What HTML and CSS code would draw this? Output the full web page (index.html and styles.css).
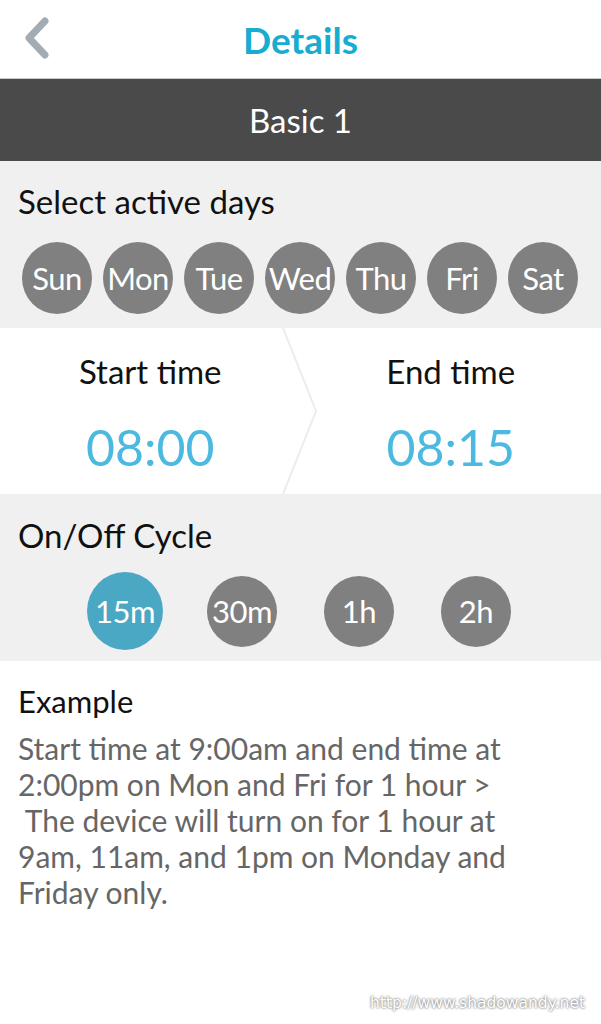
FILE: index.html
```html
<!DOCTYPE html>
<html lang="en">
<head>
<meta charset="utf-8">
<title>Details</title>
<link rel="stylesheet" href="styles.css">
</head>
<body>
<div class="screen">
  <header class="topbar">
    <svg class="back" viewBox="0 0 30 44" width="30" height="44">
      <path d="M24 5 L8 22 L24 39" fill="none" stroke="#a3acb3" stroke-width="7" stroke-linecap="round" stroke-linejoin="round"/>
    </svg>
    <h1 class="title">Details</h1>
  </header>
  <div class="namebar">Basic 1</div>

  <section class="panel days">
    <h2 class="label">Select active days</h2>
    <div class="day-row">
      <span class="day">Sun</span>
      <span class="day">Mon</span>
      <span class="day">Tue</span>
      <span class="day">Wed</span>
      <span class="day">Thu</span>
      <span class="day">Fri</span>
      <span class="day">Sat</span>
    </div>
  </section>

  <section class="times">
    <div class="time-col">
      <div class="time-label">Start time</div>
      <div class="time-value">08:00</div>
    </div>
    <svg class="divider" viewBox="0 0 40 166" width="40" height="166">
      <path d="M2 0 L35 83 L2 166" fill="none" stroke="#ececec" stroke-width="2"/>
    </svg>
    <div class="time-col">
      <div class="time-label">End time</div>
      <div class="time-value">08:15</div>
    </div>
  </section>

  <section class="panel cycle">
    <h2 class="label">On/Off Cycle</h2>
    <div class="cycle-row">
      <div class="cell"><span class="opt active">15m</span></div>
      <div class="cell"><span class="opt">30m</span></div>
      <div class="cell"><span class="opt">1h</span></div>
      <div class="cell"><span class="opt">2h</span></div>
    </div>
  </section>

  <section class="example">
    <h2 class="label small">Example</h2>
    <p class="desc">Start time at 9:00am and end time at<br>2:00pm on Mon and Fri for 1 hour &gt;<br>&nbsp;The device will turn on for 1 hour at<br>9am, 11am, and 1pm on Monday and<br>Friday only.</p>
  </section>

  <div class="watermark">http://www.shadowandy.net</div>
</div>
</body>
</html>
```
FILE: styles.css
```css
* { box-sizing: border-box; }
html, body {
  margin: 0;
  padding: 0;
  background: #ffffff;
}
body {
  font-family: Lato, "Open Sans", "Liberation Sans", sans-serif;
  color: #111;
}
.screen {
  width: 601px;
  height: 1024px;
  position: relative;
  overflow: hidden;
  background: #fff;
}
.topbar {
  height: 78px;
  display: flex;
  align-items: center;
  justify-content: center;
  position: relative;
  background: #fff;
}
.back {
  position: absolute;
  left: 21px;
  top: 16px;
}
.title {
  margin: 0;
  font-size: 37px;
  font-weight: 700;
  color: #17acd0;
  line-height: 1;
  margin-top: 0;
}
.namebar {
  height: 83px;
  background: #4a4a4a;
  border-top: 1px solid #c8c8c8;
  color: #fff;
  font-size: 33px;
  display: flex;
  align-items: center;
  justify-content: center;
}
.panel {
  background: #f0f0f0;
}
.label {
  margin: 0;
  font-weight: 400;
  font-size: 33px;
  line-height: 36px;
  color: #111;
}
.label.small {
  font-size: 31px;
}
.days {
  height: 167px;
  padding: 22px 0 0 18px;
}
.day-row {
  display: flex;
  gap: 11px;
  margin-top: 23px;
  margin-left: 4px;
}
.day {
  width: 70px;
  height: 72px;
  border-radius: 50%;
  background: #808080;
  color: #fff;
  font-size: 31px;
  letter-spacing: -0.5px;
  display: flex;
  align-items: center;
  justify-content: center;
}
.times {
  height: 166px;
  display: flex;
  background: #fff;
}
.time-col {
  flex: 1;
  display: flex;
  flex-direction: column;
  align-items: center;
  padding-top: 24px;
}
.divider {
  flex: none;
  margin-left: -20px;
  margin-right: -20px;
}
.time-label {
  font-size: 33px;
  line-height: 38px;
  color: #111;
}
.time-value {
  font-size: 50px;
  line-height: 56px;
  margin-top: 29px;
  color: #4cb9e0;
}
.cycle {
  height: 167px;
  padding: 23px 0 0 18px;
}
.cycle-row {
  display: flex;
  justify-content: center;
  margin-left: -18px;
  margin-top: 19px;
}
.cell {
  width: 117px;
  height: 78px;
  display: flex;
  align-items: center;
  justify-content: center;
}
.opt {
  width: 70px;
  height: 71px;
  border-radius: 50%;
  background: #808080;
  color: #fff;
  font-size: 31px;
  letter-spacing: -0.5px;
  display: flex;
  align-items: center;
  justify-content: center;
}
.opt.active {
  width: 76px;
  height: 78px;
  background: #4ba8c4;
}
.example {
  padding: 22px 0 0 18px;
  background: #fff;
}
.desc {
  margin: 11px 0 0 0;
  font-size: 30px;
  line-height: 36px;
  color: #666;
}
.watermark {
  position: absolute;
  right: 16px;
  bottom: 12px;
  font-size: 15.5px;
  color: #fff;
  font-family: "DejaVu Sans", sans-serif;
  text-shadow: 0 0 2px #777, 0 0 3px #999;
}
```
